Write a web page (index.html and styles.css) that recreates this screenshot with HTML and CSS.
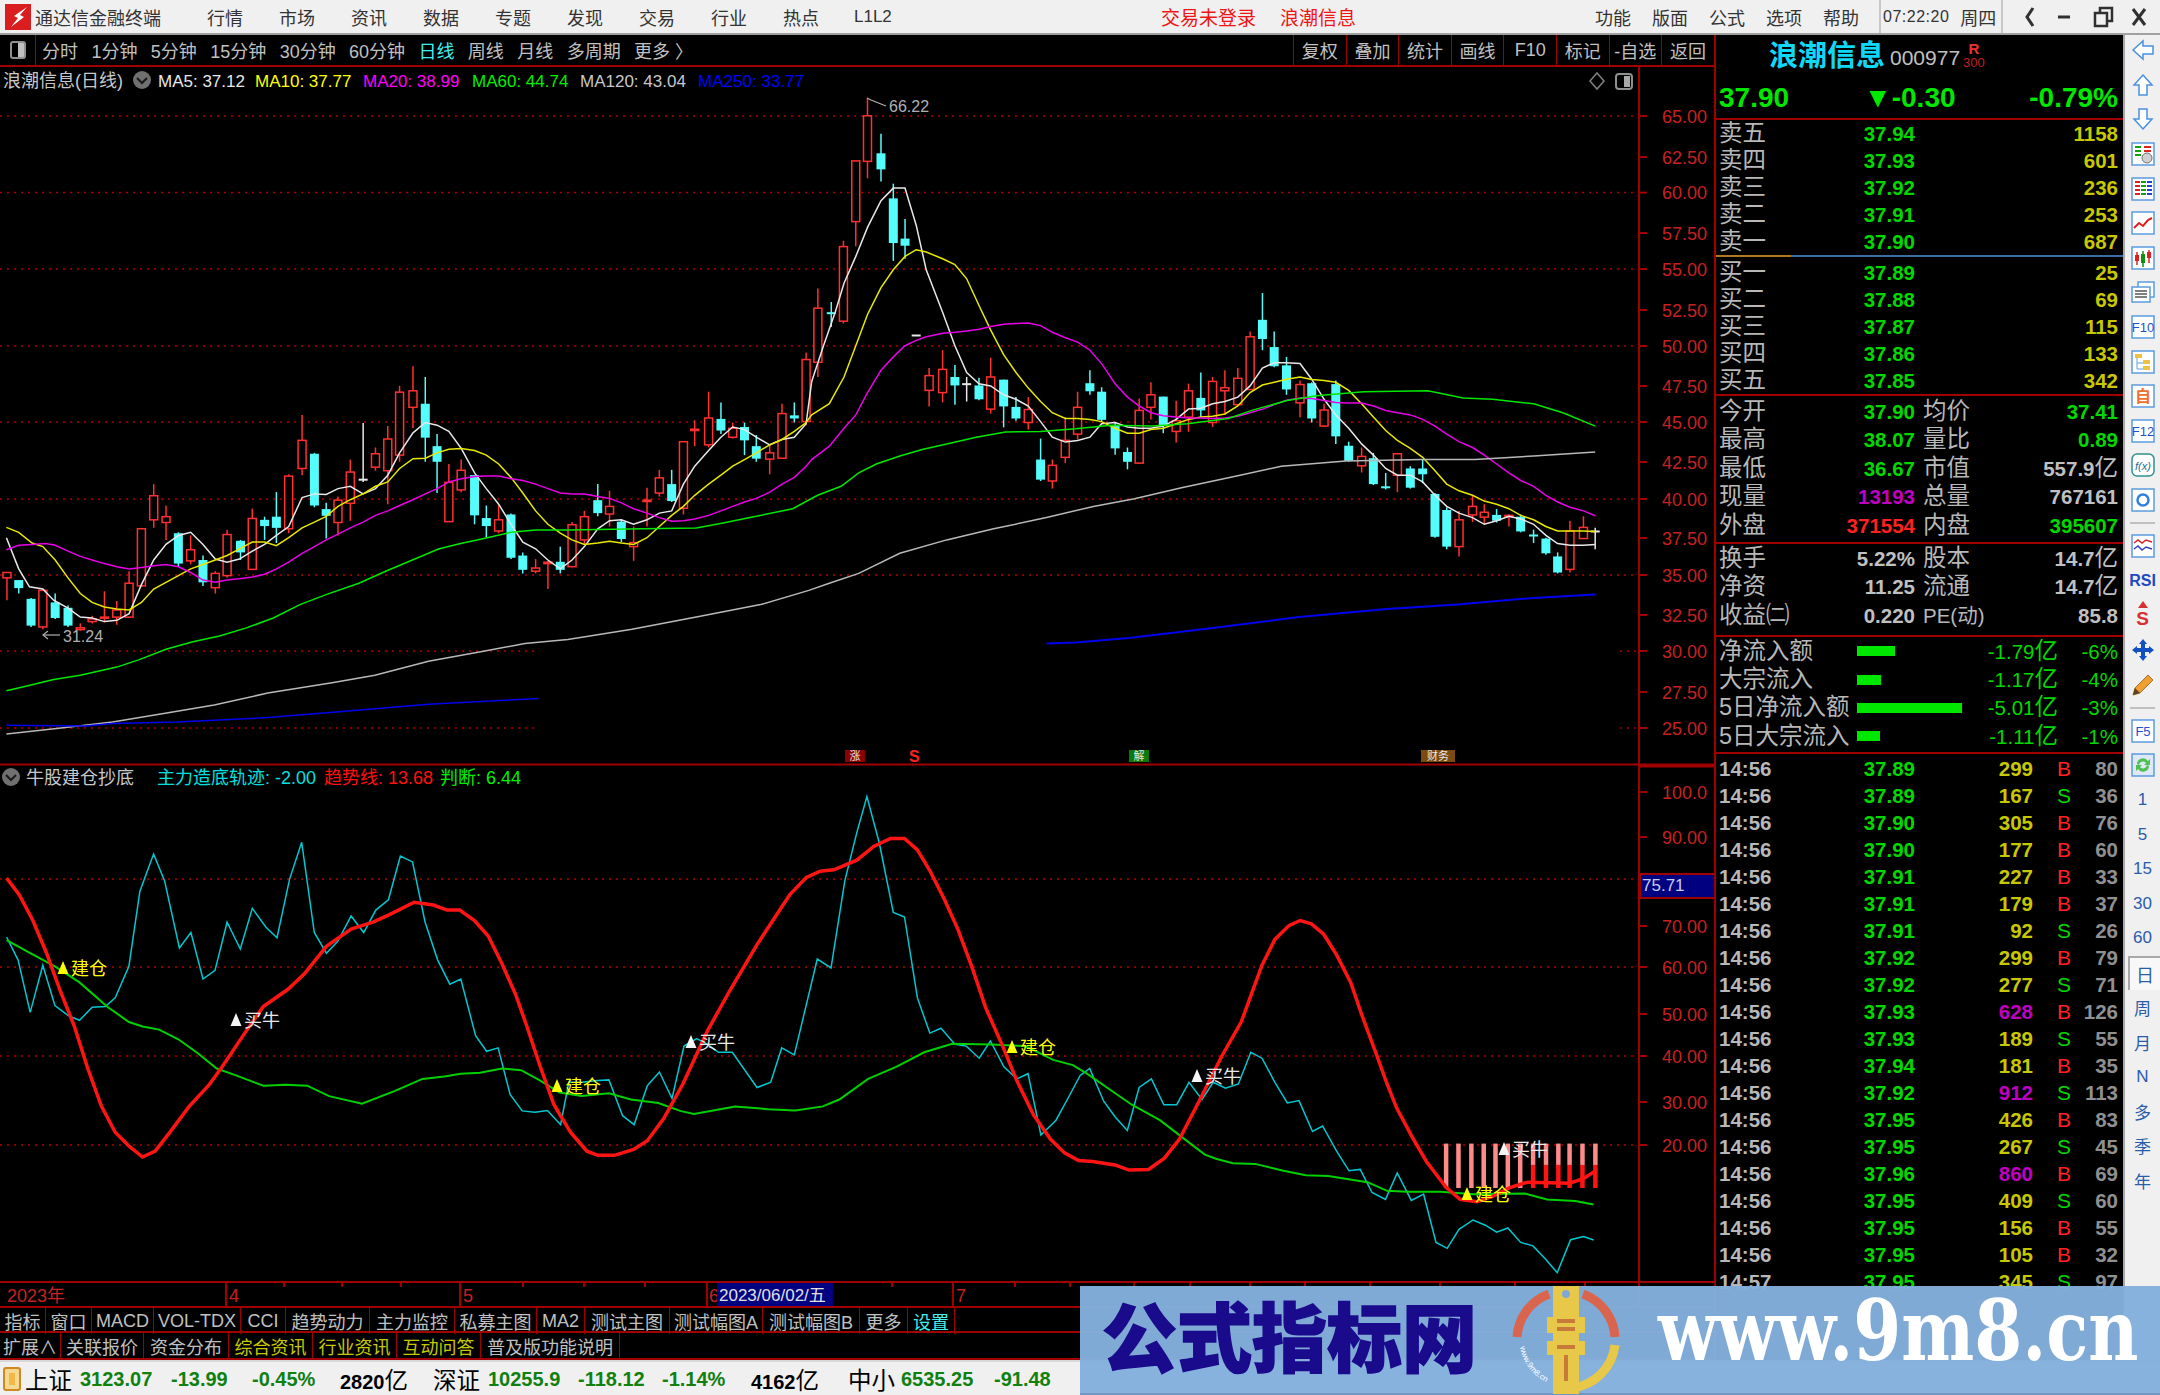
FILE: index.html
```html
<!DOCTYPE html>
<html lang="zh-CN">
<head>
    <meta charset="UTF-8">
    <title>通达信金融终端</title>
    <link rel="stylesheet" href="styles.css">
</head>
<body>
    <header class="titlebar">
        <svg class="logo" viewBox="0 0 26 26">
            <rect width="26" height="26" fill="#d81e1e"/>
            <path d="M22 3 L9 12 L13 14 L6 23 L19 13 L15 11 Z" fill="#fff"/>
        </svg>
        <span class="app-name">通达信金融终端</span>
        <nav class="menu">
            <span>行情</span><span>市场</span><span>资讯</span><span>数据</span><span>专题</span>
            <span>发现</span><span>交易</span><span>行业</span><span>热点</span><span class="small-menu">L1L2</span>
        </nav>
        <span class="login-note">交易未登录</span>
        <span class="login-stock">浪潮信息</span>
        <nav class="menu-right">
            <span>功能</span><span>版面</span><span>公式</span><span>选项</span><span>帮助</span>
        </nav>
        <div class="clock"><span class="clock-time">07:22:20</span><span>周四</span></div>
        <svg class="winbtns" viewBox="-18 0 157 34">
            <path d="M12 8 L6 17 L12 26" class="win-stroke"/>
            <path d="M37 17 H49" class="win-stroke"/>
            <path d="M74 13 H86 V26 H74 Z M79 13 V8 H91 V21 H86" class="win-stroke thin"/>
            <path d="M112 9 L124 25 M124 9 L112 25" class="win-stroke"/>
        </svg>
    </header>

    <div class="workspace">
        <section class="left-col">
            <div class="toolbar">
                <div class="toolbar-icon"><span class="pane-icon"></span></div>
                <div class="periods">
                    <span>分时</span><span>1分钟</span><span>5分钟</span><span>15分钟</span><span>30分钟</span><span>60分钟</span>
                    <span class="active">日线</span><span>周线</span><span>月线</span><span>多周期</span><span>更多 〉</span>
                </div>
                <div class="tools">
                    <span>复权</span><span>叠加</span><span>统计</span><span>画线</span><span>F10</span><span>标记</span><span>-自选</span><span>返回</span>
                </div>
            </div>

            <svg id="chart" class="chart" width="1714" height="1214" viewBox="0 67 1714 1214"></svg>

            <svg class="date-axis" width="1714" height="23" viewBox="0 0 1714 23">
                <path class="axis-line" d="M226 0 V23 M460 0 V23 M707 0 V23 M953 0 V23 M284 0 V4 M342 0 V4 M401 0 V4 M523 0 V4 M584 0 V4 M645 0 V4 M892 0 V4 M1015 0 V4 M1070 0 V4 M1134 0 V4 M1190 0 V4 M1250 0 V4 M1305 0 V4 M1370 0 V4 M1440 0 V4 M1515 0 V4 M1585 0 V4 M1639 0 V23"/>
                <text x="7" y="14" class="axis-text">2023年</text>
                <text x="229" y="14" class="axis-text">4</text>
                <text x="463" y="14" class="axis-text">5</text>
                <text x="709" y="14" class="axis-text">6</text>
                <rect x="717" y="0" width="116" height="23" class="date-cursor"/>
                <text x="719" y="14" class="date-text">2023/06/02/五</text>
                <text x="956" y="14" class="axis-text">7</text>
            </svg>

            <div class="tabs tabs-top">
                <span>指标</span><span>窗口</span><span>MACD</span><span>VOL-TDX</span><span>CCI</span><span>趋势动力</span><span>主力监控</span>
                <span>私募主图</span><span>MA2</span><span>测试主图</span><span>测试幅图A</span><span>测试幅图B</span><span>更多</span><span class="tab-cyan">设置</span>
            </div>
            <div class="tabs tabs-bottom">
                <span>扩展∧</span><span>关联报价</span><span>资金分布</span><span class="tab-yellow">综合资讯</span><span class="tab-yellow">行业资讯</span><span class="tab-yellow">互动问答</span><span>普及版功能说明</span>
            </div>
        </section>

        <aside class="quote">
            <div class="quote-head">
                <div class="stock-line">
                    <span class="stock-name">浪潮信息</span>
                    <span class="stock-code">000977</span>
                    <span class="stock-flag"><b>R</b><i>300</i></span>
                </div>
                <div class="price-line">
                    <span>37.90</span><span>▼-0.30</span><span>-0.79%</span>
                </div>
            </div>

            <div class="book">
                <div class="book-row"><span class="lab">卖五</span><span class="up">37.94</span><span class="vol">1158</span></div>
                <div class="book-row"><span class="lab">卖四</span><span class="up">37.93</span><span class="vol">601</span></div>
                <div class="book-row"><span class="lab">卖三</span><span class="up">37.92</span><span class="vol">236</span></div>
                <div class="book-row"><span class="lab">卖二</span><span class="up">37.91</span><span class="vol">253</span></div>
                <div class="book-row"><span class="lab">卖一</span><span class="up">37.90</span><span class="vol">687</span></div>
            </div>
            <div class="book-split"></div>
            <div class="book book-bids">
                <div class="book-row"><span class="lab">买一</span><span class="up">37.89</span><span class="vol">25</span></div>
                <div class="book-row"><span class="lab">买二</span><span class="up">37.88</span><span class="vol">69</span></div>
                <div class="book-row"><span class="lab">买三</span><span class="up">37.87</span><span class="vol">115</span></div>
                <div class="book-row"><span class="lab">买四</span><span class="up">37.86</span><span class="vol">133</span></div>
                <div class="book-row"><span class="lab">买五</span><span class="up">37.85</span><span class="vol">342</span></div>
            </div>

            <div class="stats stats-day">
                <div class="stat-row"><span class="lab">今开</span><span class="up">37.90</span><span class="lab">均价</span><span class="up">37.41</span></div>
                <div class="stat-row"><span class="lab">最高</span><span class="up">38.07</span><span class="lab">量比</span><span class="up">0.89</span></div>
                <div class="stat-row"><span class="lab">最低</span><span class="up">36.67</span><span class="lab">市值</span><span class="plain">557.9<em>亿</em></span></div>
                <div class="stat-row"><span class="lab">现量</span><span class="big">13193</span><span class="lab">总量</span><span class="plain">767161</span></div>
                <div class="stat-row"><span class="lab">外盘</span><span class="red">371554</span><span class="lab">内盘</span><span class="up">395607</span></div>
            </div>
            <div class="stats stats-base">
                <div class="stat-row"><span class="lab">换手</span><span class="plain">5.22%</span><span class="lab">股本</span><span class="plain">14.7<em>亿</em></span></div>
                <div class="stat-row"><span class="lab">净资</span><span class="plain">11.25</span><span class="lab">流通</span><span class="plain">14.7<em>亿</em></span></div>
                <div class="stat-row"><span class="lab">收益㈡</span><span class="plain">0.220</span><span class="lab lab-small">PE(动)</span><span class="plain">85.8</span></div>
            </div>
            <div class="flows">
                <div class="flow-row"><span class="lab">净流入额</span><span class="flow-track"><i style="width:38px"></i></span><span class="flow-num">-1.79<em>亿</em></span><span class="flow-num">-6%</span></div>
                <div class="flow-row"><span class="lab">大宗流入</span><span class="flow-track"><i style="width:24px"></i></span><span class="flow-num">-1.17<em>亿</em></span><span class="flow-num">-4%</span></div>
                <div class="flow-row"><span class="lab">5日净流入额</span><span class="flow-track"><i style="width:105px"></i></span><span class="flow-num">-5.01<em>亿</em></span><span class="flow-num">-3%</span></div>
                <div class="flow-row"><span class="lab">5日大宗流入</span><span class="flow-track"><i style="width:23px"></i></span><span class="flow-num">-1.11<em>亿</em></span><span class="flow-num">-1%</span></div>
            </div>
            <div id="ticks" class="ticks"></div>
        </aside>

        <aside class="sidebar">
            <div class="side-list">
                <div class="side-item"><svg viewBox="0 0 24 24"><path d="M2 12 L12 3 V8 H22 V16 H12 V21 Z" class="ico-arrow"/></svg></div>
                <div class="side-item"><svg viewBox="0 0 24 24"><path d="M12 2 L21 12 H16 V22 H8 V12 H3 Z" class="ico-arrow"/></svg></div>
                <div class="side-item"><svg viewBox="0 0 24 24"><path d="M12 22 L21 12 H16 V2 H8 V12 H3 Z" class="ico-arrow"/></svg></div>
                <div class="side-item"><svg viewBox="0 0 24 24"><rect x="1" y="1" width="22" height="22" class="ico-box"/><path d="M4 5 H10 M4 9 H10 M4 13 H10" stroke="#10a010" stroke-width="2"/><path d="M13 5 H20 M13 9 H20" stroke="#e02020" stroke-width="2"/><circle cx="16" cy="16" r="5" fill="#d0d0d0" stroke="#707070"/></svg></div>
                <div class="side-item"><svg viewBox="0 0 24 24"><rect x="1" y="1" width="22" height="22" class="ico-box"/><path d="M4 5 H9 M4 9 H9 M4 13 H9 M4 17 H9" stroke="#e02020" stroke-width="2"/><path d="M10 5 H15 M10 9 H15 M10 13 H15 M10 17 H15" stroke="#10a010" stroke-width="2"/><path d="M16 5 H21 M16 9 H21 M16 13 H21 M16 17 H21" stroke="#2040d0" stroke-width="2"/></svg></div>
                <div class="side-item"><svg viewBox="0 0 24 24"><rect x="1" y="1" width="22" height="22" class="ico-box"/><path d="M3 17 L8 12 L12 15 L17 9 L21 7" fill="none" stroke="#e02020" stroke-width="2"/></svg></div>
                <div class="side-item"><svg viewBox="0 0 24 24"><rect x="1" y="1" width="22" height="22" class="ico-box"/><path d="M6 6 V19 M18 4 V17" stroke="#e02020" stroke-width="1.5"/><path d="M12 5 V21" stroke="#109010" stroke-width="1.5"/><rect x="4" y="9" width="4" height="6" fill="#e02020"/><rect x="10" y="8" width="4" height="9" fill="#109010"/><rect x="16" y="6" width="4" height="6" fill="#e02020"/></svg></div>
                <div class="side-item"><svg viewBox="0 0 24 24"><rect x="7" y="2" width="16" height="15" class="ico-box"/><rect x="1" y="7" width="18" height="15" class="ico-box"/><path d="M4 11 H16 M4 14 H16 M4 17 H16" stroke="#808080" stroke-width="2"/></svg></div>
                <div class="side-item"><svg viewBox="0 0 24 24"><rect x="1" y="1" width="22" height="22" class="ico-box"/><text x="12" y="17" class="ico-text">F10</text></svg></div>
                <div class="side-item"><svg viewBox="0 0 24 24"><rect x="1" y="1" width="22" height="22" class="ico-box"/><path d="M6 8 V19 H12 M6 13 H12" fill="none" stroke="#60a0e0"/><rect x="4" y="4" width="7" height="4" fill="#f0c040"/><rect x="12" y="10" width="7" height="4" fill="#f0c040"/><rect x="12" y="16" width="7" height="4" fill="#f0c040"/></svg></div>
                <div class="side-item"><svg viewBox="0 0 24 24"><rect x="1" y="1" width="22" height="22" class="ico-box"/><text x="12" y="18" class="ico-text ico-orange">自</text></svg></div>
                <div class="side-item"><svg viewBox="0 0 24 24"><rect x="1" y="1" width="22" height="22" class="ico-box"/><text x="12" y="17" class="ico-text">F12</text></svg></div>
                <div class="side-item"><svg viewBox="0 0 24 24"><rect x="1" y="1" width="22" height="22" rx="5" class="ico-box ico-teal"/><text x="12" y="17" class="ico-text ico-fx">f(x)</text></svg></div>
                <div class="side-item"><svg viewBox="0 0 24 24"><rect x="1" y="1" width="22" height="22" class="ico-box"/><circle cx="12" cy="12" r="5.5" fill="none" stroke="#3080e0" stroke-width="2.5"/></svg></div>
                <div class="side-sep"></div>
                <div class="side-item"><svg viewBox="0 0 24 24"><rect x="1" y="1" width="22" height="22" class="ico-box"/><path d="M3 9 L7 6 L11 9 L15 6 L21 8" fill="none" stroke="#e02020" stroke-width="1.5"/><path d="M3 15 L7 12 L11 16 L15 13 L21 15" fill="none" stroke="#3040d0" stroke-width="1.5"/></svg></div>
                <div class="side-item"><span class="side-rsi">RSI</span></div>
                <div class="side-item side-dollar"><svg viewBox="0 0 24 8"><path d="M12 0 L17 7 H7 Z" fill="#d83030"/></svg><span>S</span></div>
                <div class="side-item"><svg viewBox="0 0 24 24"><path d="M12 1 L16 6 H14 V10 H18 V8 L23 12 L18 16 V14 H14 V18 H16 L12 23 L8 18 H10 V14 H6 V16 L1 12 L6 8 V10 H10 V6 H8 Z" fill="#1050c0"/></svg></div>
                <div class="side-item"><svg viewBox="0 0 24 24"><path d="M2 22 L4 15 L17 2 L22 7 L9 20 Z" fill="#f0a030" stroke="#a07030"/><path d="M2 22 L4 15 L9 20 Z" fill="#604020"/></svg></div>
                <div class="side-sep"></div>
                <div class="side-item"><svg viewBox="0 0 24 24"><rect x="1" y="1" width="22" height="22" class="ico-box"/><text x="12" y="17" class="ico-text">F5</text></svg></div>
                <div class="side-item"><svg viewBox="0 0 24 24"><rect x="1" y="1" width="22" height="22" class="ico-box ico-blue-fill"/><path d="M6 11 A6 6 0 0 1 17 8 L19 6 V12 H13 L15 10 A4 4 0 0 0 8 12 Z" fill="#50c050"/><path d="M18 13 A6 6 0 0 1 7 16 L5 18 V12 H11 L9 14 A4 4 0 0 0 16 12 Z" fill="#50c050"/></svg></div>
                <div class="side-item side-text">1</div>
                <div class="side-item side-text">5</div>
                <div class="side-item side-text">15</div>
                <div class="side-item side-text">30</div>
                <div class="side-item side-text">60</div>
                <div class="side-item side-text side-active">日</div>
                <div class="side-item side-text">周</div>
                <div class="side-item side-text">月</div>
                <div class="side-item side-text">N</div>
                <div class="side-item side-text">多</div>
                <div class="side-item side-text">季</div>
                <div class="side-item side-text">年</div>
            </div>
        </aside>
    </div>

    <footer class="statusbar">
        <span class="status-icon"></span>
        <span class="idx-name">上证</span><span class="idx-num">3123.07</span><span class="idx-num">-13.99</span><span class="idx-num">-0.45%</span><span class="idx-amt">2820<em>亿</em></span>
        <span class="idx-name">深证</span><span class="idx-num">10255.9</span><span class="idx-num">-118.12</span><span class="idx-num">-1.14%</span><span class="idx-amt">4162<em>亿</em></span>
        <span class="idx-name">中小</span><span class="idx-num">6535.25</span><span class="idx-num">-91.48</span>
    </footer>

    <div class="watermark">
        <span class="wm-title">公式指标网</span>
        <svg class="wm-logo" viewBox="0 0 110 110">
            <defs><path id="wm-curve" d="M9 62 A47 47 0 0 0 48 101"/></defs>
            <path d="M6 52 A49 49 0 0 1 38 9" class="wm-arc wm-arc-red"/>
            <path d="M72 9 A49 49 0 0 1 104 52" class="wm-arc wm-arc-red"/>
            <path d="M104 60 A49 49 0 0 1 62 103" class="wm-arc wm-arc-yellow"/>
            <rect x="42" y="1" width="26" height="108" fill="#e8c848"/>
            <circle cx="55" cy="9" r="4" fill="#80a8d6"/>
            <rect x="36" y="32" width="38" height="16" fill="#e8c848"/>
            <rect x="36" y="56" width="38" height="14" fill="#e8c848"/>
            <path d="M46 36 H64 M46 44 H64 M46 62 H64 M55 70 V96" stroke="#c87a3a" stroke-width="4"/>
            <text font-size="8" fill="#fff"><textPath href="#wm-curve">www.9m8.cn</textPath></text>
        </svg>
        <span class="wm-url">www.9m8.cn</span>
    </div>

    <script src="app.js"></script>
</body>
</html>
```

FILE: styles.css
```css
* {
    box-sizing: border-box;
}
html, body {
    margin: 0;
    width: 2160px;
    height: 1395px;
    overflow: hidden;
}
body {
    position: relative;
    background-color: #000;
    font-family: "Liberation Sans", "Noto Sans CJK SC", sans-serif;
    color: #c0c0c0;
}
em, i {
    font-style: normal;
}

/* title bar */
.titlebar {
    height: 35px;
    display: flex;
    align-items: center;
    background-color: #f0f0f0;
    border-bottom: 2px solid #a0a0a0;
    color: #333;
    font-size: 18px;
    white-space: nowrap;
}
.logo {
    width: 26px;
    height: 26px;
    margin-left: 5px;
}
.app-name {
    margin-left: 4px;
    width: 126px;
}
.menu {
    display: flex;
    gap: 36px;
    margin-left: 46px;
    width: 684px;
}
.small-menu {
    font-size: 17px;
    line-height: 26px;
    margin-left: -1px;
}
.login-note, .login-stock {
    color: #f01414;
    font-size: 19px;
}
.login-note {
    margin-left: 270px;
}
.login-stock {
    margin-left: 24px;
}
.menu-right {
    display: flex;
    gap: 21px;
    margin-left: 239px;
}
.clock {
    display: flex;
    align-items: center;
    gap: 11px;
    height: 33px;
    margin-left: 20px;
    width: 124px;
    padding-left: 2px;
    border-left: 2px solid #c8c8c8;
    border-right: 2px solid #c8c8c8;
}
.clock-time {
    font-size: 16px;
    letter-spacing: .5px;
}
.winbtns {
    width: 157px;
    height: 34px;
}
.win-stroke {
    fill: none;
    stroke: #303030;
    stroke-width: 3;
}
.win-stroke.thin {
    stroke-width: 2.5;
}

/* main area */
.workspace {
    display: flex;
    height: 1325px;
}
.left-col {
    width: 1716px;
    border-right: 2px solid #a00000;
    display: flex;
    flex-direction: column;
}
.toolbar {
    height: 32px;
    display: flex;
    align-items: stretch;
    border-bottom: 2px solid #a00000;
    font-size: 18px;
    white-space: nowrap;
}
.toolbar-icon {
    width: 36px;
    display: flex;
    align-items: center;
    justify-content: center;
    border-right: 1px solid #a00000;
}
.pane-icon {
    width: 16px;
    height: 18px;
    border: 2px solid #909090;
    border-radius: 3px;
    background: linear-gradient(90deg, #000 50%, #c0c0c0 50%);
}
.periods {
    display: flex;
    align-items: center;
    gap: 13.4px;
    margin-left: 6px;
    width: 1251px;
}
.periods .active {
    color: #40f0f0;
}
.tools {
    display: grid;
    grid-template-columns: repeat(8, 52.6px);
}
.tools span {
    display: flex;
    align-items: center;
    justify-content: center;
    border-left: 1px solid #a00000;
}
.chart {
    display: block;
    flex: none;
}
.date-axis {
    display: block;
    flex: none;
    height: 25px;
    border-top: 2px solid #a00000;
}
.tabs {
    display: grid;
    flex: none;
    font-size: 18px;
    white-space: nowrap;
    border-top: 2px solid #a00000;
}
.tabs span {
    display: flex;
    align-items: center;
    justify-content: center;
    border-right: 1px solid #a00000;
}
.tabs-top {
    height: 25px;
    grid-template-columns: 46px 46px 62px 87px 45px 84px 85px 82px 48px 85px 93px 97px 48px 47px;
}
.tabs-bottom {
    height: 29px;
    border-bottom: 2px solid #a00000;
    grid-template-columns: 61px 83px 85px 84px 84px 84px 139px;
}
.tab-yellow {
    color: #c8c800;
}
.tab-cyan {
    color: #40f0f0;
}

/* chart drawing */
.grid-line {
    stroke: #b00000;
    stroke-width: 1.5;
    stroke-dasharray: 2 5;
}
.axis-line {
    stroke: #a00000;
    stroke-width: 2;
    fill: none;
}
.axis-text {
    fill: #c82020;
    font-size: 18px;
    dominant-baseline: middle;
}
.axis-num {
    text-anchor: end;
}
.date-cursor {
    fill: #000080;
}
.date-text {
    fill: #e0e0e0;
    font-size: 17px;
    dominant-baseline: middle;
}
.legend {
    font-size: 17px;
    dominant-baseline: middle;
}
.legend-cn {
    font-size: 18px;
    dominant-baseline: middle;
}
.peak-text {
    fill: #b0b0b0;
    font-size: 16px;
    dominant-baseline: middle;
}
.sign-text {
    font-size: 18px;
    dominant-baseline: middle;
}
.pin-text {
    font-size: 11px;
    fill: #e8e8e8;
    text-anchor: middle;
    dominant-baseline: middle;
}
.marker-tag {
    fill: #c8d0f0;
    font-size: 17px;
    dominant-baseline: middle;
}
.f-gray { fill: #c8c8c8; }
.f-white { fill: #e8e8e8; }
.f-yellow { fill: #ffff00; }
.f-magenta { fill: #ff00ff; }
.f-green { fill: #00f000; }
.f-blue { fill: #0000ff; }
.f-cyan { fill: #00e0e0; }
.f-red { fill: #ff1010; }

/* quote panel */
.quote {
    width: 409px;
    border-right: 2px solid #a8a8a8;
    overflow: hidden;
}
.quote-head {
    height: 85px;
    border-bottom: 2px solid #a00000;
}
.stock-line {
    height: 42px;
    display: flex;
    align-items: center;
    padding-left: 53px;
}
.stock-name {
    color: #10d8f8;
    font-size: 29px;
    font-weight: bold;
    line-height: 40px;
}
.stock-code {
    font-size: 21px;
    margin-left: 5px;
    margin-top: 3px;
}
.stock-flag {
    display: flex;
    flex-direction: column;
    align-items: center;
    color: #f03030;
    margin-left: 3px;
    line-height: 14px;
}
.stock-flag b {
    font-size: 15px;
}
.stock-flag i {
    font-size: 13px;
    color: #c02020;
}
.price-line {
    height: 41px;
    display: grid;
    grid-template-columns: 145px 1fr auto;
    align-items: center;
    padding: 0 5px 0 3px;
    color: #00e800;
    font-size: 28px;
    font-weight: bold;
}
.book-row, .stat-row, .flow-row, .tick-row {
    display: grid;
    align-items: center;
    padding: 0 5px 0 3px;
    white-space: nowrap;
    line-height: 27px;
}
.book-row span, .stat-row span, .flow-row span, .tick-row span {
    height: 27px;
}
.book-row {
    height: 27px;
    grid-template-columns: 90px 106px 1fr;
}
.lab {
    font-size: 23.5px;
    line-height: 27px;
    color: #b8b8b8;
}
.lab.lab-small {
    font-size: 20.5px;
}
.book-row span:not(.lab), .stat-row span:not(.lab), .tick-row span {
    font-size: 20.5px;
    font-weight: bold;
    text-align: right;
}
.up { color: #00d800; }
.vol { color: #c8c800; }
.red { color: #ff2020; }
.big { color: #c000c0; }
.plain { color: #c0c0c0; }
.plain em, .flow-num em {
    font-size: 23.5px;
    font-weight: normal;
    line-height: 20px;
}
.book-split {
    height: 2px;
    background: linear-gradient(90deg, #b07820 75px, #3a6ea5 75px);
}
.book-bids {
    padding-top: 2px;
}
.stats {
    border-top: 2px solid #a00000;
}
.stats-day {
    padding-top: 1px;
    height: 148px;
}
.stats-base {
    height: 93px;
}
.stat-row {
    height: 28.5px;
    grid-template-columns: 90px 106px 47px 1fr;
    column-gap: 0;
}
.stat-row .lab:nth-child(3) {
    margin-left: 8px;
}
.flows {
    height: 119px;
    border-top: 2px solid #a00000;
    border-bottom: 2px solid #a00000;
}
.flow-row {
    height: 28.4px;
    grid-template-columns: 138px 110px 91px 1fr;
}
.flow-track {
    display: flex;
    align-items: center;
}
.flow-track i {
    display: block;
    height: 10px;
    background-color: #00e800;
}
.flow-num {
    color: #00d800;
    font-size: 20.5px;
    text-align: right;
}
.ticks {
    padding-top: 1px;
}
.tick-row {
    height: 27px;
    grid-template-columns: 53px 143px 118px 38px 1fr;
}
.tick-row .t-time {
    color: #b8b8b8;
    text-align: left;
}
.tick-row .t-count {
    color: #909090;
}
.tick-row .t-b {
    color: #ff2020;
    font-weight: normal;
    font-size: 21px;
}
.tick-row .t-s {
    color: #00d800;
    font-weight: normal;
    font-size: 21px;
}
.tick-row .t-big {
    color: #c000c0;
}

/* right tool strip */
.sidebar {
    flex: 1;
    background-color: #f0f0f0;
}
.side-list {
    margin-top: -2px;
}
.side-item {
    height: 34.6px;
    display: flex;
    align-items: center;
    justify-content: center;
}
.side-item svg {
    width: 24px;
    height: 24px;
}
.side-dollar {
    flex-direction: column;
    color: #d83030;
    font-size: 19px;
    font-weight: bold;
    line-height: 20px;
}
.side-item.side-dollar svg {
    height: 8px;
}
.side-sep {
    height: 11.6px;
    display: flex;
    align-items: center;
    padding: 0 5px;
}
.side-sep::before {
    content: "";
    flex: 1;
    height: 2px;
    background-color: #c0c0c0;
}
.ico-arrow {
    fill: #fff;
    stroke: #4a90e0;
    stroke-width: 1.5;
}
.ico-box {
    fill: #fff;
    stroke: #5b9be0;
    stroke-width: 1.5;
}
.ico-box.ico-teal {
    stroke: #309090;
}
.ico-box.ico-blue-fill {
    fill: #dfe8f8;
}
.ico-text {
    fill: #1f50d0;
    font-size: 13px;
    text-anchor: middle;
}
.ico-text.ico-orange {
    fill: #f07030;
    font-size: 16px;
    font-weight: bold;
}
.ico-text.ico-fx {
    fill: #207090;
    font-size: 11px;
    font-style: italic;
}
.side-rsi {
    color: #2048c0;
    font-size: 16px;
    font-weight: bold;
}
.side-text {
    color: #2a5caa;
    font-size: 17px;
}
.side-active {
    background-color: #f8f8f8;
    border-top: 2px solid #a8a8a8;
    border-left: 2px solid #a8a8a8;
    font-size: 18px;
    margin-left: 3px;
}

/* index bar */
.statusbar {
    height: 35px;
    display: grid;
    grid-template-columns: 25px 55px 91px 81px 88px 93px 55px 90px 84px 89px 97px 53px 93px 84px 1fr;
    align-items: center;
    background-color: #f0f0f0;
    border-top: 2px solid #d8d8d8;
    color: #000;
    white-space: nowrap;
}
.status-icon {
    width: 18px;
    height: 24px;
    margin-left: 3px;
    background-color: #f0b848;
    border: 2px solid #d08820;
    border-radius: 3px;
    box-shadow: inset 0 0 0 4px #f6d890;
}
.idx-name {
    font-size: 23.5px;
}
.idx-num {
    color: #108010;
    font-size: 20px;
    font-weight: bold;
}
.idx-amt {
    font-size: 20px;
    font-weight: bold;
}
.idx-amt em {
    font-size: 23.5px;
    font-weight: normal;
}

/* watermark band laid over the lower right corner */
.watermark {
    position: absolute;
    left: 1080px;
    top: 1286px;
    width: 1080px;
    height: 109px;
    display: flex;
    align-items: center;
    background-color: rgba(131, 175, 221, .97);
    border-bottom: 2px solid #6f95c0;
    white-space: nowrap;
}
.wm-title {
    width: 375px;
    margin-left: 22px;
    color: #1a0a8c;
    font-size: 75px;
    font-weight: 900;
    line-height: 80px;
    -webkit-text-stroke: 1.5px #1a0a8c;
}
.wm-logo {
    width: 110px;
    height: 110px;
    margin-left: 34px;
    flex: none;
}
.wm-arc {
    fill: none;
    stroke-width: 9;
}
.wm-arc-red {
    stroke: #d9654f;
}
.wm-arc-yellow {
    stroke: #e8c848;
}
.wm-url {
    margin-left: 37px;
    margin-top: -18px;
    color: #fff;
    font-family: "DejaVu Serif", serif;
    font-size: 69px;
    font-weight: bold;
    line-height: 70px;
    transform: scaleY(1.22);
}
```

FILE: app.js
```js
// Pixel data was read off the reference, in crop coordinates, then mapped to the page.
const lx = x => x / 1.867;
const rx = x => 800 + x / 1.704;
const py = y => 60 + y / 2.24;
const lowLx = x => x / 1.823;
const lowRx = x => 840 + x / 1.782;
const lowY = y => 750 + y / 2.904;

// x, high, body top, body bottom, low, kind
const candlesLeft = [
    [13,1148,1148,1160,1210,'r'],[35,1165,1165,1183,1195,'c'],[58,1205,1207,1267,1270,'c'],[80,1185,1188,1270,1275,'r'],
    [103,1195,1215,1250,1252,'c'],[127,1222,1227,1267,1270,'c'],[150,1262,1272,1276,1278,'r'],[172,1245,1252,1258,1262,'r'],
    [195,1190,1248,1250,1260,'r'],[218,1212,1232,1248,1265,'r'],[241,1145,1172,1248,1250,'r'],[264,1048,1050,1178,1180,'r'],
    [287,950,976,1030,1048,'r'],[310,998,1023,1036,1075,'r'],[333,1058,1060,1128,1135,'c'],[356,1065,1097,1122,1130,'r'],
    [379,1110,1120,1170,1178,'c'],[402,1145,1150,1182,1195,'r'],[424,1052,1063,1155,1160,'r'],[449,1075,1077,1103,1120,'c'],
    [471,1005,1027,1141,1142,'r'],[494,1023,1030,1044,1075,'c'],[516,968,1023,1048,1082,'c'],[539,928,932,1050,1060,'r'],
    [564,795,852,915,930,'r'],[587,880,882,998,1002,'c'],[609,992,1006,1021,1072,'c'],[631,978,986,1036,1065,'r'],
    [654,895,923,993,1032,'r'],[678,813,939,941,945,'w'],[701,868,882,912,920,'r'],[724,820,849,920,995,'r'],
    [746,730,744,885,900,'r'],[771,686,741,778,825,'r'],[794,710,770,846,900,'c'],[816,838,865,900,970,'c'],
    [838,905,946,1034,1035,'r'],[861,895,919,963,968,'r'],[886,930,930,1020,1040,'c'],[908,998,1026,1044,1070,'c'],
    [931,995,1030,1055,1060,'r'],[954,1016,1018,1115,1118,'c'],[976,1103,1110,1142,1150,'c'],[1000,1118,1138,1145,1150,'r'],
    [1023,1122,1125,1128,1185,'r'],[1046,1090,1124,1142,1150,'c'],[1068,1035,1041,1135,1136,'r'],[1091,1010,1023,1075,1085,'r'],
    [1116,950,986,1015,1022,'c'],[1138,965,1000,1017,1045,'r'],[1160,1030,1034,1073,1080,'c'],[1183,1045,1081,1090,1122,'r'],
    [1208,958,986,989,1045,'r'],[1231,918,936,970,978,'r'],[1254,918,950,988,990,'c'],[1276,855,855,1004,1018,'r'],
    [1297,807,827,830,865,'r'],[1323,743,802,862,868,'r'],[1346,767,804,830,838,'c'],[1368,812,825,845,848,'r'],
    [1390,812,822,852,885,'c'],[1412,840,865,893,900,'c'],[1437,862,880,894,928,'r'],[1460,770,792,892,893,'r'],
    [1483,767,796,803,812,'c'],[1505,655,671,810,818,'r'],[1527,512,556,677,710,'r'],[1552,542,566,570,598,'c']
];
const candlesRight = [
    [74,405,418,585,590,'r'],[95,226,226,362,417,'r'],[115,85,125,227,265,'r'],[138,165,209,245,272,'c'],[159,277,310,410,450,'c'],
    [179,356,400,416,445,'c'],[198,616,616,618,618,'w'],[220,690,707,740,776,'r'],[243,650,693,745,767,'r'],[264,683,710,729,772,'c'],
    [284,710,725,728,765,'w'],[305,712,729,760,762,'c'],[325,667,710,782,792,'r'],[347,716,716,776,823,'c'],[368,755,777,803,808,'c'],
    [389,755,783,812,828,'r'],[410,848,895,940,943,'c'],[430,895,908,943,960,'r'],[452,800,852,890,903,'r'],[473,743,778,838,850,'r'],
    [494,695,724,742,750,'c'],[514,733,743,806,810,'c'],[537,812,820,870,884,'c'],[558,868,878,900,917,'c'],[578,758,785,903,905,'r'],
    [598,722,750,778,805,'r'],[619,754,754,820,836,'c'],[641,763,808,832,857,'r'],[662,725,741,800,833,'r'],[683,700,757,785,800,'c'],
    [703,710,720,812,822,'r'],[724,695,734,741,795,'r'],[746,690,713,772,775,'r'],[767,608,620,738,740,'r'],[788,522,582,625,650,'c'],
    [808,608,643,686,688,'c'],[829,665,684,738,750,'c'],[852,718,727,768,800,'r'],[872,722,724,803,812,'c'],[893,770,784,820,822,'r'],
    [913,718,726,843,860,'c'],[935,855,864,898,900,'c'],[957,868,888,909,924,'r'],[977,880,892,950,952,'c'],[998,925,956,960,962,'c'],
    [1018,880,882,930,968,'r'],[1040,910,915,958,960,'c'],[1061,895,915,928,948,'c'],[1082,970,972,1068,1070,'c'],[1102,1002,1008,1090,1096,'c'],
    [1123,1010,1030,1090,1112,'r'],[1146,975,1000,1019,1035,'r'],[1166,995,1013,1024,1040,'r'],[1187,1006,1019,1032,1036,'c'],[1208,1018,1020,1023,1045,'r'],
    [1228,1018,1023,1056,1058,'c'],[1250,1052,1064,1068,1082,'c'],[1271,1070,1072,1105,1108,'c'],[1291,1103,1112,1148,1150,'c'],[1312,1032,1055,1141,1148,'r'],
    [1335,1022,1047,1072,1073,'r'],[1355,1048,1055,1057,1096,'w']
];

const maLines = [
    { color: '#e8e8e8', left: '12,1070 35,1140 55,1180 80,1185 100,1210 127,1228 150,1248 172,1250 195,1258 218,1255 241,1240 264,1175 287,1120 310,1085 333,1065 356,1058 379,1085 402,1118 424,1125 447,1118 471,1100 494,1085 516,1065 539,1045 564,980 587,972 609,973 631,960 654,955 678,972 701,960 724,930 746,880 771,835 794,812 816,818 838,832 861,870 886,925 908,960 931,995 954,1040 976,1080 1000,1095 1023,1120 1046,1140 1068,1120 1091,1090 1116,1050 1138,1032 1160,1030 1183,1040 1208,1030 1231,1015 1254,1010 1276,950 1297,910 1323,875 1346,845 1368,822 1390,828 1412,845 1437,862 1460,850 1483,845 1505,815',
      right: '20,720 40,640 60,565 75,500 95,440 115,375 138,315 159,287 179,287 198,370 215,470 243,565 264,640 284,700 305,725 325,730 347,750 368,760 389,775 410,810 430,845 452,856 473,852 494,845 514,815 537,812 558,822 578,825 598,825 619,820 641,805 662,782 683,780 703,770 724,765 746,755 767,730 788,690 808,678 829,678 852,680 872,715 893,760 913,795 935,825 957,860 977,885 998,915 1018,930 1040,930 1061,945 1082,975 1102,1000 1123,1015 1146,1025 1166,1040 1187,1032 1208,1022 1228,1028 1250,1040 1271,1065 1291,1083 1312,1087 1335,1087 1355,1085' },
    { color: '#e8e800', left: '12,1047 35,1058 60,1082 80,1090 103,1120 127,1160 150,1195 172,1215 195,1225 218,1230 241,1232 264,1215 287,1185 310,1170 333,1155 356,1140 379,1130 402,1120 424,1110 447,1095 471,1080 494,1080 516,1088 539,1070 564,1048 587,1035 609,1022 631,1000 654,985 678,972 701,955 724,945 746,915 771,893 794,892 816,880 838,872 861,870 886,875 908,885 931,905 954,935 976,970 1000,1010 1023,1040 1046,1060 1068,1075 1091,1085 1116,1082 1138,1078 1160,1082 1183,1085 1208,1070 1231,1045 1254,1020 1276,1000 1297,975 1323,950 1346,930 1368,910 1390,895 1412,880 1437,862 1460,850 1483,832 1505,812',
      right: '20,795 50,770 75,710 95,640 115,570 138,510 159,470 179,440 198,425 215,430 243,445 264,458 284,490 305,550 325,605 347,660 368,700 389,735 410,765 430,790 452,803 473,803 494,805 514,810 537,825 558,836 578,836 598,828 619,825 641,815 662,805 683,800 703,798 724,793 746,775 767,745 788,728 808,722 829,715 852,710 872,716 893,718 913,722 935,740 957,770 977,800 998,830 1018,852 1040,870 1061,890 1082,920 1102,950 1123,965 1146,975 1166,988 1187,995 1208,1005 1228,1020 1250,1030 1271,1045 1291,1055 1312,1055 1335,1055 1355,1056' },
    { color: '#e800e8', left: '12,1097 35,1087 60,1085 85,1083 103,1087 127,1100 150,1112 172,1120 195,1128 218,1135 241,1140 264,1137 287,1133 310,1130 333,1135 356,1148 379,1165 402,1170 424,1165 447,1162 471,1158 494,1152 516,1140 539,1125 564,1105 587,1090 609,1075 631,1062 654,1048 678,1035 701,1020 724,1010 746,998 771,985 794,972 816,960 838,945 861,938 886,933 908,932 931,932 954,938 976,942 1000,950 1023,960 1046,970 1068,972 1091,972 1116,978 1138,982 1160,992 1183,1005 1208,1015 1231,1025 1254,1033 1276,1032 1297,1028 1323,1020 1346,1010 1368,1000 1390,990 1412,982 1437,968 1460,950 1483,935 1505,910',
      right: '20,895 50,865 75,825 95,795 115,745 138,695 159,665 179,640 198,628 215,620 243,612 264,610 284,607 305,603 325,597 347,592 368,590 389,589 410,595 430,610 452,622 473,632 494,650 514,680 537,725 558,755 578,775 598,790 619,797 641,800 662,802 683,802 703,803 724,802 746,798 767,790 788,782 808,772 829,762 852,757 872,758 893,763 913,767 935,768 957,768 977,775 998,785 1018,790 1040,795 1061,805 1082,820 1102,838 1123,855 1146,868 1166,885 1187,905 1208,925 1228,942 1250,955 1271,975 1291,990 1312,1002 1335,1010 1355,1021' },
    { color: '#00e800', left: '12,1413 50,1402 100,1388 150,1378 218,1360 260,1343 310,1320 360,1303 410,1290 460,1272 510,1250 560,1220 610,1197 670,1172 720,1145 770,1120 820,1095 860,1083 910,1070 954,1058 1000,1053 1060,1053 1200,1050 1300,1048 1350,1037 1400,1025 1480,1005',
      right: '30,975 70,955 100,925 130,905 170,887 210,872 250,860 300,845 350,833 410,832 470,826 530,818 600,820 660,815 730,803 770,785 830,763 880,752 960,743 1070,741 1130,757 1180,760 1250,770 1300,790 1355,820' },
    { color: '#b8b8b8', left: '12,1510 110,1497 210,1483 300,1465 400,1445 500,1418 620,1395 700,1378 800,1347 900,1325 980,1307 1060,1298 1180,1275 1300,1248 1420,1220 1510,1188',
      right: '50,1172 100,1150 170,1105 250,1075 330,1050 420,1025 500,1000 570,983 650,958 750,930 820,910 930,898 1060,895 1150,895 1250,887 1355,878' }
];
const ma250Left = '12,1490 160,1492 210,1486 330,1483 500,1473 650,1458 800,1443 1005,1430';
const ma250Right = '420,1307 470,1305 560,1295 700,1273 850,1248 1000,1230 1120,1220 1250,1205 1355,1197';

const lowLines = [
    { color: '#00c8d0', width: 1.5,
      left: '12,543 33,610 55,762 78,625 100,742 125,772 145,785 168,747 192,745 210,720 235,628 255,410 280,302 300,380 327,575 348,530 370,665 392,640 414,500 438,578 460,460 485,515 505,545 528,375 550,268 573,530 595,590 616,555 640,482 663,530 685,465 708,435 730,308 752,325 775,500 798,610 820,680 840,665 867,830 887,875 908,865 930,1000 952,1048 975,1052 998,1047 1022,1088 1037,965 1060,965 1090,960 1110,958 1135,1062 1156,1088 1180,975 1202,935 1225,1012 1247,860 1270,838 1290,855 1310,878 1335,878 1380,980 1405,965 1425,865 1448,885 1490,607 1515,633 1540,380',
      right: '30,240 48,135 70,270 95,472 115,485 138,720 160,822 180,808 205,855 225,860 248,895 268,845 292,920 315,955 335,940 358,1118 385,1075 405,1015 428,945 445,925 470,1020 490,1065 512,1105 533,980 555,955 577,1030 600,1030 622,965 645,1015 665,965 687,982 710,970 732,878 752,895 775,965 797,1025 818,1018 842,1108 860,1092 885,1165 907,1222 927,1218 948,1285 972,1305 993,1228 1018,1308 1040,1290 1062,1430 1082,1447 1103,1392 1128,1365 1150,1380 1170,1400 1190,1388 1213,1430 1235,1440 1258,1480 1278,1518 1302,1422 1325,1413 1343,1423' },
    { color: '#00d000', width: 2,
      left: '12,552 55,590 100,628 145,675 195,745 235,790 260,803 290,812 325,840 360,880 395,925 430,945 480,975 520,972 560,975 600,1005 660,1027 720,990 770,955 810,948 840,940 875,937 915,925 950,930 985,960 1020,995 1060,1005 1110,997 1150,1015 1200,1025 1240,1048 1265,1057 1340,1035 1400,1043 1450,1047 1500,1035 1530,1015',
      right: '50,955 100,920 150,878 200,853 270,855 330,860 380,900 415,915 440,940 480,985 520,1030 570,1075 610,1125 650,1175 670,1187 700,1200 740,1202 790,1222 830,1235 870,1237 940,1255 975,1280 1010,1283 1070,1283 1130,1290 1220,1288 1260,1305 1310,1310 1343,1320' },
    { color: '#ff1414', width: 3.5,
      left: '12,372 35,420 60,495 85,590 110,700 135,800 160,925 185,1035 210,1110 235,1150 260,1182 283,1165 310,1110 345,1035 380,975 405,920 445,825 480,745 525,695 555,650 595,570 640,520 680,500 710,478 755,442 790,450 815,465 838,465 865,495 890,540 915,620 940,710 960,800 985,920 1010,1030 1040,1110 1070,1165 1090,1177 1120,1177 1155,1160 1180,1135 1210,1070 1245,970 1290,815 1330,700 1380,565 1440,420 1470,370 1495,352 1520,348',
      right: '30,320 60,280 90,257 115,257 138,290 160,350 185,430 210,520 235,630 260,750 290,860 315,960 345,1060 375,1130 400,1170 425,1192 450,1195 490,1205 515,1220 550,1218 578,1185 605,1130 640,1020 680,890 715,790 752,625 775,550 800,510 820,495 840,505 862,535 885,595 910,675 930,770 955,880 975,970 992,1040 1020,1125 1045,1195 1080,1270 1105,1305 1135,1312 1165,1295 1195,1270 1225,1255 1300,1258 1325,1245 1348,1220' }
];

const convert = (text, fx, fy) => text.split(' ').map(p => {
    const [x, y] = p.split(',').map(Number);
    return fx(x).toFixed(1) + ',' + fy(y).toFixed(1);
}).join(' ');

const parts = [];
const poly = (points, color, width) => parts.push(`<polyline points="${points}" fill="none" stroke="${color}" stroke-width="${width}"/>`);
const line = (x1, y1, x2, y2, cls) => parts.push(`<line x1="${x1}" y1="${y1}" x2="${x2}" y2="${y2}" class="${cls}"/>`);
// middle baseline sits a little high for these fonts, hence the +2
const label = (x, y, str, cls) => parts.push(`<text x="${x}" y="${y + 2}" class="${cls}">${str}</text>`);

// grid
[116, 192.6, 269, 346, 422, 499, 575].forEach(y => line(0, y, 1639, y, 'grid-line'));
[651, 728].forEach(y => {
    line(0, y, 537, y, 'grid-line');
    line(1620, y, 1639, y, 'grid-line');
});
[879, 967, 1056, 1145].forEach(y => line(0, y, 1639, y, 'grid-line'));

// panes and axes
parts.push('<path class="axis-line" d="M0 764.5 H1714 M1639 67 V1281 M1639 766.5 H1714"/>');
const priceAxis = [[65, 116], [62.5, 157], [60, 192.6], [57.5, 233], [55, 269], [52.5, 310], [50, 346], [47.5, 386], [45, 422], [42.5, 462], [40, 499], [37.5, 538], [35, 575], [32.5, 615], [30, 651], [27.5, 692], [25, 728]];
priceAxis.forEach(([v, y]) => {
    line(1640, y, 1647, y, 'axis-line');
    label(1707, y, v.toFixed(2), 'axis-text axis-num');
});
const lowAxis = [['100.0', 792], ['90.00', 837], ['70.00', 926], ['60.00', 967], ['50.00', 1014], ['40.00', 1056], ['30.00', 1102], ['20.00', 1145]];
lowAxis.forEach(([v, y]) => {
    line(1640, y, 1647, y, 'axis-line');
    label(1707, y, v, 'axis-text axis-num');
});
parts.push('<rect x="1640" y="874" width="75" height="24" fill="#000080" stroke="#a00000" stroke-width="2"/>');
label(1642, 885, '75.71', 'marker-tag');

// candles
function drawCandle(c, fx) {
    const [zx, hi, top, bot, lo, kind] = c;
    const x = fx(zx);
    const color = kind === 'r' ? '#ff3030' : kind === 'c' ? '#54fcfc' : '#e8e8e8';
    parts.push(`<line x1="${x}" y1="${py(hi)}" x2="${x}" y2="${py(lo)}" stroke="${color}" stroke-width="1.5"/>`);
    const y = py(top);
    const h = Math.max(py(bot) - y, 1);
    if (kind === 'r') {
        parts.push(`<rect x="${x - 4}" y="${y}" width="8" height="${h}" fill="#000" stroke="${color}" stroke-width="1.5"/>`);
    } else {
        parts.push(`<rect x="${x - 4.5}" y="${y - (h < 2 ? 0.5 : 0)}" width="9" height="${Math.max(h, 2)}" fill="${color}"/>`);
    }
}
candlesLeft.forEach(c => drawCandle(c, lx));
candlesRight.forEach(c => drawCandle(c, rx));

// moving averages
maLines.forEach(m => poly(convert(m.left, lx, py) + ' ' + convert(m.right, rx, py), m.color, 1.5));
poly(convert(ma250Left, lx, py), '#0000f0', 1.5);
poly(convert(ma250Right, rx, py), '#0000f0', 2);

// high and low notes
poly('867,98 871,100 886,106', '#b0b0b0', 1.2);
label(889, 105.5, '66.22', 'peak-text');
poly('44,635 60,635', '#b0b0b0', 1.2);
poly('48,631 43,635 48,639', '#b0b0b0', 1.2);
label(63, 636, '31.24', 'peak-text');

// event pins along the bottom of the price pane
[[855, 20, '#8b0000', '涨'], [1139, 20, '#0a7a0a', '解'], [1438, 34, '#7a4a10', '财务']].forEach(([x, w, fill, t]) => {
    parts.push(`<rect x="${x - w / 2}" y="750" width="${w}" height="12" fill="${fill}"/>`);
    label(x, 755, t, 'pin-text');
});
parts.push('<text x="909" y="762" font-size="16" font-weight="bold" fill="#ff2020">S</text>');

// legends
label(3, 80, '浪潮信息(日线)', 'legend-cn f-gray');
parts.push('<circle cx="142" cy="80" r="9" fill="#707070"/><path d="M137 78 L142 83 L147 78" fill="none" stroke="#1a1a1a" stroke-width="2"/>');
[[158, 'MA5: 37.12', 'f-white'], [255, 'MA10: 37.77', 'f-yellow'], [363, 'MA20: 38.99', 'f-magenta'], [472, 'MA60: 44.74', 'f-green'], [580, 'MA120: 43.04', 'f-gray'], [698, 'MA250: 33.77', 'f-blue']]
    .forEach(([x, t, cls]) => label(x, 81, t, 'legend ' + cls));
parts.push('<path d="M1597 73 L1604 81 L1597 89 L1590 81 Z" fill="none" stroke="#808080" stroke-width="1.5"/>');
parts.push('<rect x="1616" y="74" width="16" height="15" rx="3" fill="none" stroke="#909090" stroke-width="2"/><rect x="1624" y="76" width="6" height="11" fill="#a8a8a8"/>');

parts.push('<circle cx="11" cy="777" r="9" fill="#707070"/><path d="M6 775 L11 780 L16 775" fill="none" stroke="#1a1a1a" stroke-width="2"/>');
label(26, 777.5, '牛股建仓抄底', 'legend-cn f-gray');
label(157, 777.5, '主力造底轨迹: -2.00', 'legend-cn f-cyan');
label(324, 777.5, '趋势线: 13.68', 'legend-cn f-red');
label(440, 777.5, '判断: 6.44', 'legend-cn f-green');

// pink and red bars of the last few days
[1080, 1102, 1125, 1147, 1168, 1190, 1212, 1235, 1258, 1280, 1300, 1323, 1346].forEach((zx, i) => {
    const x = lowRx(zx) - 2.2;
    const solid = i > 6;
    const mid = solid ? lowY(1205) : lowY(1272);
    parts.push(`<rect x="${x}" y="${lowY(1143)}" width="4.5" height="${mid - lowY(1143)}" fill="#ff8a8a"/>`);
    if (solid) parts.push(`<rect x="${x}" y="${mid}" width="4.5" height="${lowY(1272) - mid}" fill="#ff1414"/>`);
});

lowLines.forEach(m => poly(convert(m.left, lowLx, lowY) + ' ' + convert(m.right, lowRx, lowY), m.color, m.width));

// signal markers
function sign(x, y, text, cls, color) {
    parts.push(`<path d="M${x} ${y - 7} L${x + 5.5} ${y + 6} H${x - 5.5} Z" fill="${color}"/>`);
    label(x + 8, y, text, 'sign-text ' + cls);
}
[[63, 968], [557, 1086], [1012, 1047], [1467, 1194]].forEach(([x, y]) => sign(x, y, '建仓', 'f-yellow', '#ffff00'));
[[236, 1020], [691, 1042], [1197, 1076], [1504, 1149]].forEach(([x, y]) => sign(x, y, '买牛', 'f-white', '#f4f4f4'));

document.getElementById('chart').innerHTML = parts.join('');

// tick list
const ticks = [
    ['14:56', '37.89', 299, 'B', 80], ['14:56', '37.89', 167, 'S', 36], ['14:56', '37.90', 305, 'B', 76], ['14:56', '37.90', 177, 'B', 60],
    ['14:56', '37.91', 227, 'B', 33], ['14:56', '37.91', 179, 'B', 37], ['14:56', '37.91', 92, 'S', 26], ['14:56', '37.92', 299, 'B', 79],
    ['14:56', '37.92', 277, 'S', 71], ['14:56', '37.93', 628, 'B', 126], ['14:56', '37.93', 189, 'S', 55], ['14:56', '37.94', 181, 'B', 35],
    ['14:56', '37.92', 912, 'S', 113], ['14:56', '37.95', 426, 'B', 83], ['14:56', '37.95', 267, 'S', 45], ['14:56', '37.96', 860, 'B', 69],
    ['14:56', '37.95', 409, 'S', 60], ['14:56', '37.95', 156, 'B', 55], ['14:56', '37.95', 105, 'B', 32], ['14:57', '37.95', 345, 'S', 97]
];
document.getElementById('ticks').innerHTML = ticks.map(t => `
    <div class="tick-row">
        <span class="t-time">${t[0]}</span>
        <span class="up">${t[1]}</span>
        <span class="vol ${t[2] >= 500 ? 't-big' : ''}">${t[2]}</span>
        <span class="${t[3] === 'B' ? 't-b' : 't-s'}">${t[3]}</span>
        <span class="t-count">${t[4]}</span>
    </div>`).join('');
```
